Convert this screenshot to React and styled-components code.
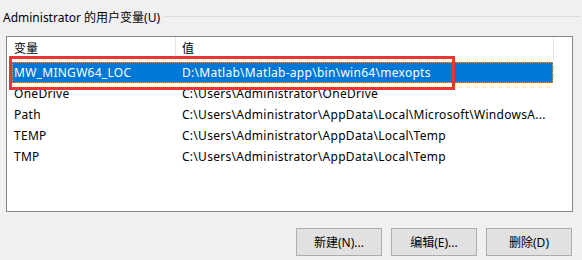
import styled, { createGlobalStyle } from "styled-components";

const Global = createGlobalStyle`
  html, body {
    margin: 0;
    padding: 0;
    background: #f0f0f0;
  }
  body {
    font-family: "Noto Sans", "Noto Sans CJK SC", sans-serif;
    font-size: 12px;
    color: #000;
  }
`;

const Panel = styled.div`
  width: 582px;
  height: 260px;
  box-sizing: border-box;
  overflow: hidden;
`;

const GroupHead = styled.div`
  display: flex;
  align-items: center;
  height: 34px;
  padding-left: 3px;
`;

const GroupLabel = styled.span`
  white-space: nowrap;
`;

const GroupLine = styled.div`
  flex: 1;
  height: 1px;
  margin: -2px 2px 0 4px;
  background: #dcdcdc;
`;

const ListBox = styled.div`
  position: relative;
  margin: 2px 0 0 6px;
  width: 567px;
  height: 176px;
  box-sizing: border-box;
  border: 1px solid #828790;
  background: #fff;
`;

const HeaderRow = styled.div`
  display: flex;
  height: 24px;
  margin-bottom: 1px;
`;

const HeaderCell = styled.div`
  width: ${(p) => p.$w}px;
  box-sizing: border-box;
  padding-left: ${(p) => p.$pad}px;
  border-right: 1px solid #e5e5e5;
  display: flex;
  align-items: center;
  line-height: 1;
`;

const Row = styled.div`
  display: flex;
  align-items: center;
  height: 21px;
  margin-left: 5px;
  width: 541px;
  box-sizing: border-box;
  letter-spacing: 0.28px;
  background: ${(p) => (p.$selected ? "#0078d7" : "transparent")};
  color: ${(p) => (p.$selected ? "#fff" : "#000")};
  outline: ${(p) => (p.$selected ? "1px dotted #ff9a28" : "none")};
  outline-offset: -1px;
`;

const Cell = styled.div`
  width: ${(p) => p.$w}px;
  box-sizing: border-box;
  padding-left: ${(p) => p.$pad}px;
  white-space: nowrap;
  overflow: hidden;
`;

const Highlight = styled.div`
  position: absolute;
  left: 2px;
  top: 19px;
  width: 446px;
  height: 34px;
  box-sizing: border-box;
  border: 3px solid #ee3535;
  pointer-events: none;
`;

const ButtonBar = styled.div`
  display: flex;
  justify-content: flex-end;
  gap: 9px;
  margin: 16px 10px 0 0;
`;

const Button = styled.button`
  width: 86px;
  height: 28px;
  box-sizing: border-box;
  border: 1px solid #adadad;
  background: #e1e1e1;
  font: inherit;
  color: #000;
  padding: 0;
`;

const rows = [
  ["MW_MINGW64_LOC", "D:\\Matlab\\Matlab-app\\bin\\win64\\mexopts", true],
  ["OneDrive", "C:\\Users\\Administrator\\OneDrive"],
  ["Path", "C:\\Users\\Administrator\\AppData\\Local\\Microsoft\\WindowsA..."],
  ["TEMP", "C:\\Users\\Administrator\\AppData\\Local\\Temp"],
  ["TMP", "C:\\Users\\Administrator\\AppData\\Local\\Temp"],
];

export default function App() {
  return (
    <Panel>
      <Global />
      <GroupHead>
        <GroupLabel>Administrator 的用户变量(U)</GroupLabel>
        <GroupLine />
      </GroupHead>
      <ListBox>
        <HeaderRow>
          <HeaderCell $w={169} $pad={7}>变量</HeaderCell>
          <HeaderCell $w={378} $pad={6}>值</HeaderCell>
        </HeaderRow>
        {rows.map(([name, value, sel]) => (
          <Row key={name} $selected={sel}>
            <Cell $w={163} $pad={2}>{name}</Cell>
            <Cell $w={378} $pad={7}>{value}</Cell>
          </Row>
        ))}
        <Highlight />
      </ListBox>
      <ButtonBar>
        <Button>新建(N)...</Button>
        <Button>编辑(E)...</Button>
        <Button>删除(D)</Button>
      </ButtonBar>
    </Panel>
  );
}
